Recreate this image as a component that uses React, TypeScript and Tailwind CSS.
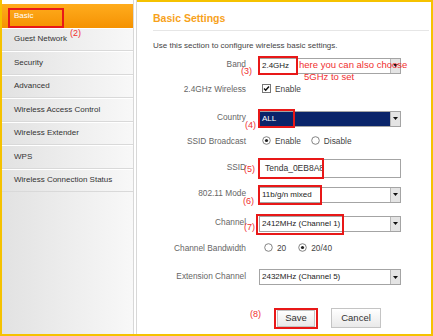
import React from 'react';

const menu = [
  'Basic',
  'Guest Network',
  'Security',
  'Advanced',
  'Wireless Access Control',
  'Wireless Extender',
  'WPS',
  'Wireless Connection Status',
];

function Arrow() {
  return (
    <div className="flex h-full w-[10px] shrink-0 items-center justify-center border-l border-[#b8b8b8] bg-[#e4e4e4]">
      <svg width="5" height="3" viewBox="0 0 5 3">
        <path d="M0 0h5L2.5 3z" fill="#111" />
      </svg>
    </div>
  );
}

function Select({ value, dark = false }: { value: string; dark?: boolean }) {
  return (
    <div className="flex h-[16px] w-[142px] items-stretch border border-[#a4a4a4] bg-white">
      <div
        className={
          dark
            ? 'flex flex-1 items-center bg-[#0a246a] pl-[2px] text-[8px] text-white'
            : 'flex flex-1 items-center pl-[2px] text-[8px] text-[#222]'
        }
      >
        {value}
      </div>
      <Arrow />
    </div>
  );
}

function Radio({ checked }: { checked?: boolean }) {
  return (
    <svg width="9" height="9" viewBox="0 0 9 9" className="shrink-0">
      <circle cx="4.5" cy="4.5" r="3.8" fill="#fff" stroke="#777" strokeWidth="0.9" />
      {checked && <circle cx="4.5" cy="4.5" r="1.6" fill="#222" />}
    </svg>
  );
}

function Note({ children, className }: { children: React.ReactNode; className: string }) {
  return (
    <span className={`absolute whitespace-nowrap leading-none text-[#f03030] ${className}`}>{children}</span>
  );
}

function Row({ label, h, children }: { label: string; h: string; children: React.ReactNode }) {
  return (
    <div className={`flex items-center ${h}`}>
      <div className="mb-[3px] w-[109px] shrink-0 text-right text-[8.3px] text-[#666]">{label}</div>
      <div className="relative ml-[13px] flex items-center">{children}</div>
    </div>
  );
}

export default function App() {
  return (
    <div
      className="flex h-[336px] w-[433px] overflow-hidden border-b-2 border-l-2 border-r-2 border-[#f5c200] bg-white"
      style={{ fontFamily: '"Liberation Sans", Arial, sans-serif' }}
    >
      {/* Sidebar */}
      <div className="relative flex w-[131px] shrink-0 flex-col bg-white pt-[4px]">
        <div className="flex flex-1 flex-col bg-gradient-to-r from-[#e2e2e2] to-[#f8f8f8]">
          {menu.map((item, i) => (
            <div
              key={item}
              className={
                i === 0
                  ? 'flex h-[23.5px] items-center bg-gradient-to-b from-[#ffac1c] to-[#f59200] pl-[12px] text-[8px] text-white'
                  : 'flex h-[23.5px] items-center border-b border-[#d9d9d9] border-t border-t-white pl-[12px] text-[8px] text-[#333]'
              }
            >
              {item}
            </div>
          ))}
        </div>
        <div className="absolute left-[6px] top-[8px] h-[20px] w-[56px] border-2 border-[#e81818]" />
        <Note className="left-[68px] top-[29px] text-[9px]">(2)</Note>
      </div>

      {/* Divider */}
      <div className="flex w-[4px] shrink-0 border-l border-r border-[#d8d8d8] bg-white" />

      {/* Content */}
      <div className="relative flex flex-1 flex-col border-t-2 border-[#f5c200]">
        <div className="ml-[16px] mr-[2px] mt-[9px] border-b border-[#e6e6e6] pb-[3px] text-[10.5px] font-bold text-[#f7a21b]">
          Basic Settings
        </div>
        <div className="ml-[16px] mt-[9px] text-[8px] text-[#444]">
          Use this section to configure wireless basic settings.
        </div>

        <div className="mt-[3px] flex flex-col">
          <Row label="Band" h="h-[22px]">
            <Select value="2.4GHz" />
            <div className="absolute left-[-1px] top-[-2px] h-[19px] w-[40px] border-2 border-[#e81818]" />
            <Note className="left-[40px] top-[2px] text-[9.5px]">here you can also choose</Note>
            <Note className="left-[45px] top-[14px] text-[9.5px]">5GHz to set</Note>
            <Note className="left-[-18px] top-[9px] text-[9px]">(3)</Note>
          </Row>

          <Row label="2.4GHz Wireless" h="h-[28px]">
            <div className="flex items-center gap-[4px] pl-[3px] pb-[4px]">
              <svg width="9" height="9" viewBox="0 0 9 9">
                <rect x="0.5" y="0.5" width="8" height="8" fill="#fff" stroke="#777" />
                <path d="M2 4.5l1.7 1.8L7 2.5" fill="none" stroke="#111" strokeWidth="1.4" />
              </svg>
              <span className="text-[8.3px] text-[#444]">Enable</span>
            </div>
          </Row>

          <Row label="Country" h="h-[28px]">
            <Select value="ALL" dark />
            <div className="absolute left-[-1px] top-[-2px] h-[19px] w-[37px] border-2 border-[#e81818]" />
            <Note className="left-[-14px] top-[10px] text-[9px]">(4)</Note>
          </Row>

          <Row label="SSID Broadcast" h="h-[20px]">
            <div className="flex items-center gap-[4px] pl-[3px] pb-[4px] text-[8.3px] text-[#444]">
              <Radio checked />
              <span>Enable</span>
              <span className="w-[2px]" />
              <Radio />
              <span>Disable</span>
            </div>
          </Row>

          <Row label="SSID" h="h-[31px]">
            <div className="flex h-[19px] w-[142px] items-center border border-[#a4a4a4] bg-white pl-[5px] text-[8.5px] text-[#333]">
              Tenda_0EB8A8
            </div>
            <div className="absolute left-[-1px] top-[-1px] h-[21px] w-[66px] border-2 border-[#e81818]" />
            <Note className="left-[-15px] top-[6px] text-[9px]">(5)</Note>
          </Row>

          <Row label="802.11 Mode" h="h-[22px]">
            <Select value="11b/g/n mixed" />
            <div className="absolute left-[-1px] top-[-2px] h-[20px] w-[64px] border-2 border-[#e81818]" />
            <Note className="left-[-16px] top-[10px] text-[9px]">(6)</Note>
          </Row>

          <Row label="Channel" h="h-[36px]">
            <Select value="2412MHz (Channel 1)" />
            <div className="absolute left-[-3px] top-[-2px] h-[21px] w-[88px] border-2 border-[#e81818]" />
            <Note className="left-[-15px] top-[7px] text-[9px]">(7)</Note>
          </Row>

          <Row label="Channel Bandwidth" h="h-[16px]">
            <div className="flex items-center gap-[4px] pl-[5px] pb-[4px] text-[8.3px] text-[#444]">
              <Radio />
              <span>20</span>
              <span className="w-[4px]" />
              <Radio checked />
              <span>20/40</span>
            </div>
          </Row>

          <Row label="Extension Channel" h="h-[39px]">
            <Select value="2432MHz (Channel 5)" />
          </Row>
        </div>

        <div className="relative ml-[137px] mt-[11px] flex items-center gap-[13px]">
          <Note className="left-[-24px] top-[2px] text-[9px]">(8)</Note>
          <div className="flex h-[21px] w-[44px] items-center justify-center border-2 border-[#e81818] bg-white">
            <button className="h-[17px] w-[38px] border border-[#c4c4c4] bg-gradient-to-b from-white to-[#e9e9e9] text-[9.5px] text-[#333]">
              Save
            </button>
          </div>
          <button className="h-[20px] w-[50px] border border-[#c4c4c4] bg-gradient-to-b from-white to-[#e9e9e9] text-[9.5px] text-[#333]">
            Cancel
          </button>
        </div>
      </div>
    </div>
  );
}
